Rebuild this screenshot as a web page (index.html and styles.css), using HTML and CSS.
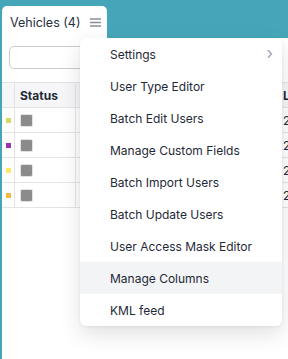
FILE: index.html
```html
<!DOCTYPE html>
<html lang="en">
  <head>
    <meta charset="UTF-8" />
    <title>Vehicles</title>
    <link rel="stylesheet" href="styles.css">
  </head>
  <body>
    <div class="app">
      <div class="tabs">
        <div class="tab">
          <span class="tab-title">Vehicles (4)</span>
          <svg class="burger" width="11" height="9" viewBox="0 0 11 9">
            <path d="M0 1h11M0 4.5h11M0 8h11" stroke="#8a8f96" stroke-width="1.4" />
          </svg>
        </div>
      </div>

      <div class="panel">
        <div class="toolbar">
          <input class="search" type="text" />
        </div>

        <div class="grid">
          <div class="row head">
            <div class="cell"></div>
            <div class="cell">Status</div>
            <div class="cell"></div>
            <div class="cell">Last Update</div>
          </div>
          <div class="row">
            <div class="cell"><span class="dot lime"></span></div>
            <div class="cell"><span class="status"></span></div>
            <div class="cell"></div>
            <div class="cell">2024-05-14</div>
          </div>
          <div class="row">
            <div class="cell"><span class="dot purple"></span></div>
            <div class="cell"><span class="status"></span></div>
            <div class="cell"></div>
            <div class="cell">2024-05-14</div>
          </div>
          <div class="row">
            <div class="cell"><span class="dot yellow"></span></div>
            <div class="cell"><span class="status"></span></div>
            <div class="cell"></div>
            <div class="cell">2024-05-14</div>
          </div>
          <div class="row">
            <div class="cell"><span class="dot orange"></span></div>
            <div class="cell"><span class="status"></span></div>
            <div class="cell"></div>
            <div class="cell">2024-05-14</div>
          </div>
        </div>
      </div>
    </div>

    <div class="menu">
      <div class="menu-item">Settings <span class="chev">›</span></div>
      <div class="menu-item">User Type Editor</div>
      <div class="menu-item">Batch Edit Users</div>
      <div class="menu-item">Manage Custom Fields</div>
      <div class="menu-item">Batch Import Users</div>
      <div class="menu-item">Batch Update Users</div>
      <div class="menu-item">User Access Mask Editor</div>
      <div class="menu-item active">Manage Columns</div>
      <div class="menu-item">KML feed</div>
    </div>
  </body>
</html>
```

FILE: styles.css
```css
body {
  font-family: Inter, "Noto Sans", sans-serif;
  background-color: #46a6b9;
  color: #1f2937;
  margin: 0;
  padding: 0;
  overflow: hidden;
  height: 359px;
}
.app {
  padding: 6px 0 0 2px;
  display: flex;
  flex-direction: column;
  height: 353px;
}
.tabs {
  display: flex;
}
.tab {
  display: flex;
  align-items: center;
  gap: 10px;
  width: 105px;
  height: 32px;
  box-sizing: border-box;
  padding: 0 0 0 8px;
  background-color: #ffffff;
  border-radius: 5px 5px 0 0;
}
.tab-title {
  font-size: 12.5px;
  color: #27303d;
  white-space: nowrap;
}
.burger {
  flex-shrink: 0;
  margin-top: 1px;
}
.panel {
  flex: 1;
  background-color: #ffffff;
}
.toolbar {
  padding: 8px 0 0 7px;
}
.search {
  display: block;
  width: 220px;
  height: 23px;
  box-sizing: border-box;
  margin: 0;
  border: 1px solid #c9cdd2;
  border-radius: 5px;
  background-color: #ffffff;
}
.grid {
  margin-top: 13px;
  border-top: 1px solid #e4e4e6;
}
.row {
  display: grid;
  grid-template-columns: 13px 61px 206px 1fr;
  height: 24px;
  border-bottom: 1px solid #e4e4e6;
}
.row.head {
  height: 24px;
  background-color: #f6f6f8;
  font-weight: bold;
  font-size: 12px;
}
.cell {
  display: flex;
  align-items: center;
  border-right: 1px solid #e4e4e6;
  padding-left: 5px;
  font-size: 12px;
  white-space: nowrap;
  overflow: hidden;
}
.cell:first-child {
  padding-left: 4px;
}
.cell:last-child {
  border-right: none;
  padding-left: 1px;
}
.dot {
  width: 5px;
  height: 5px;
}
.lime { background-color: #d3dc5e; }
.purple { background-color: #9535b0; }
.yellow { background-color: #fde76c; }
.orange { background-color: #f5b944; }
.status {
  width: 11px;
  height: 11px;
  background-color: #8b8b8b;
  border: 1px solid #e2e2e2;
  border-radius: 2px;
}
.menu {
  position: absolute;
  left: 80px;
  top: 38px;
  width: 202px;
  background-color: #ffffff;
  border-radius: 6px;
  overflow: hidden;
  box-shadow: 0 8px 22px rgba(0, 0, 0, 0.12), 0 1px 3px rgba(0, 0, 0, 0.06);
}
.menu-item {
  display: flex;
  align-items: center;
  justify-content: space-between;
  height: 32px;
  padding: 0 9px 0 30px;
  font-size: 12px;
  color: #1f2937;
}
.menu-item.active {
  background-color: #f3f4f6;
}
.chev {
  color: #9ca3af;
  font-size: 17px;
  margin-top: -2px;
}
```
